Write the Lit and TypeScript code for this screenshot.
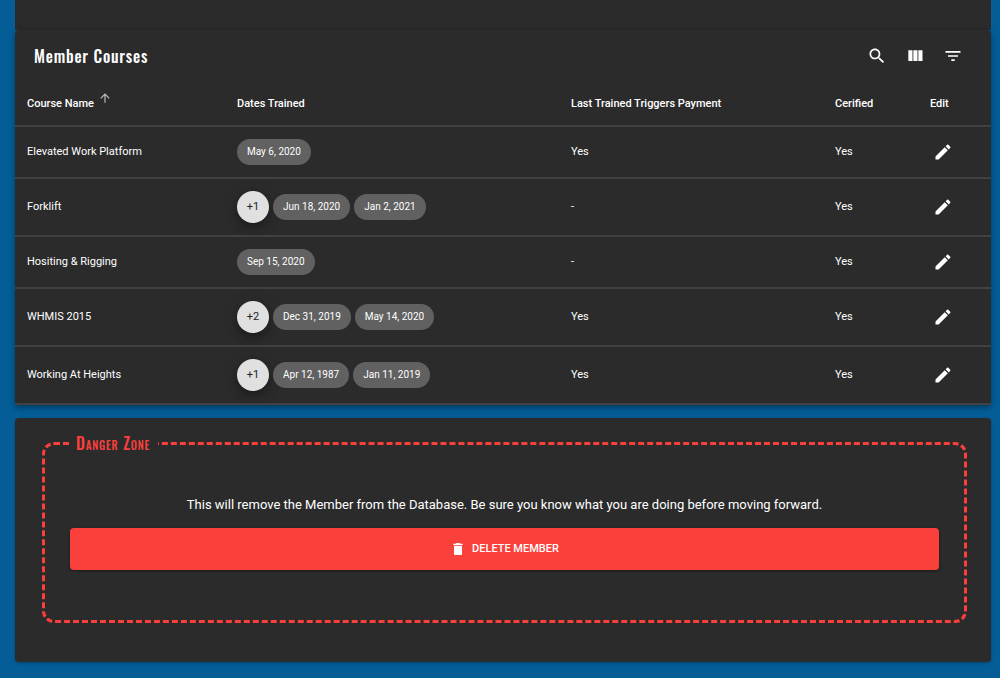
import { LitElement, html, css, svg } from "lit";
import { customElement } from "lit/decorators.js";

interface Course {
  name: string;
  more: number;
  dates: string[];
  payment: string;
  certified: string;
}

const courses: Course[] = [
  { name: "Elevated Work Platform", more: 0, dates: ["May 6, 2020"], payment: "Yes", certified: "Yes" },
  { name: "Forklift", more: 1, dates: ["Jun 18, 2020", "Jan 2, 2021"], payment: "-", certified: "Yes" },
  { name: "Hositing & Rigging", more: 0, dates: ["Sep 15, 2020"], payment: "-", certified: "Yes" },
  { name: "WHMIS 2015", more: 2, dates: ["Dec 31, 2019", "May 14, 2020"], payment: "Yes", certified: "Yes" },
  { name: "Working At Heights", more: 1, dates: ["Apr 12, 1987", "Jan 11, 2019"], payment: "Yes", certified: "Yes" },
];

const paths = {
  search:
    "M15.5 14h-.79l-.28-.27C15.41 12.59 16 11.11 16 9.5 16 5.91 13.09 3 9.5 3S3 5.91 3 9.5 5.91 16 9.5 16c1.61 0 3.09-.59 4.23-1.57l.27.28v.79l5 4.99L20.49 19l-4.99-5zm-6 0C7.01 14 5 11.99 5 9.5S7.01 5 9.5 5 14 7.01 14 9.5 11.99 14 9.5 14z",
  columns: "M10 18h5V5h-5v13zm-6 0h5V5H4v13zM16 5v13h5V5h-5z",
  filter: "M10 18h4v-2h-4v2zM3 6v2h18V6H3zm3 7h12v-2H6v2z",
  edit: "M3 17.25V21h3.75L17.81 9.94l-3.75-3.75L3 17.25zM20.71 7.04c.39-.39.39-1.02 0-1.41l-2.34-2.34c-.39-.39-1.02-.39-1.41 0l-1.83 1.83 3.75 3.75 1.83-1.83z",
  trash: "M6 19c0 1.1.9 2 2 2h8c1.1 0 2-.9 2-2V7H6v12zM19 4h-3.5l-1-1h-5l-1 1H5v2h14V4z",
  up: "M4 12l1.41 1.41L11 7.83V20h2V7.83l5.58 5.59L20 12l-8-8-8 8z",
};

const icon = (name: keyof typeof paths) => html`<svg viewBox="0 0 24 24" aria-hidden="true">
  ${svg`<path d=${paths[name]}></path>`}
</svg>`;

@customElement("app-root")
export class AppRoot extends LitElement {
  static styles = css`
    :host {
      display: block;
      min-height: 100vh;
      box-sizing: border-box;
      padding: 0 9px 16px 15px;
      background: #045d97;
      color: #fff;
      font: 11px/20px Roboto, sans-serif;
    }
    * {
      box-sizing: border-box;
    }
    svg {
      display: block;
      width: 20px;
      height: 20px;
      fill: currentColor;
    }
    button {
      border: 0;
      padding: 0;
      background: none;
      color: inherit;
      font: inherit;
      cursor: pointer;
    }
    .above {
      height: 30px;
      background: #2b2b2b;
    }
    .courses {
      background: #2b2b2b;
      border-radius: 4px;
      box-shadow: 0 2px 4px -1px rgba(0, 0, 0, 0.2), 0 4px 5px rgba(0, 0, 0, 0.14),
        0 1px 10px rgba(0, 0, 0, 0.12);
    }
    .toolbar {
      display: flex;
      align-items: center;
      justify-content: space-between;
      height: 51px;
      padding: 0 28px 0 19px;
    }
    h2,
    legend {
      margin: 0;
      font: 500 16px/20px Oswald, "Liberation Sans Narrow", sans-serif;
      letter-spacing: 0.05em;
    }
    .tools {
      display: flex;
      gap: 18px;
    }
    table {
      width: 100%;
      table-layout: fixed;
      border-collapse: separate;
      border-spacing: 0;
    }
    th,
    td {
      padding: 0 0 0 12px;
      height: 52px;
      text-align: left;
      border-bottom: 2px solid #414141;
    }
    th {
      height: 46px;
      padding-top: 2px;
      font-weight: 500;
    }
    .name {
      width: 210px;
    }
    .payment {
      width: 264px;
    }
    .certified {
      width: 95px;
    }
    .edit {
      width: 73px;
    }
    .sort {
      display: flex;
      align-items: center;
      gap: 4px;
      font-weight: 500;
    }
    .sort svg {
      width: 14px;
      height: 14px;
      margin-bottom: 12px;
      color: #bdbdbd;
    }
    .sort,
    .sort span {
      height: 20px;
    }
    .tall td {
      height: 58px;
    }
    .dates {
      display: flex;
      align-items: center;
      gap: 4px;
    }
    .chip {
      padding: 3px 10px;
      border-radius: 13px;
      background: #616161;
      font-size: 10px;
    }
    .more {
      width: 32px;
      height: 32px;
      border-radius: 50%;
      background: #e0e0e0;
      color: #222;
      box-shadow: 0 3px 5px -1px rgba(0, 0, 0, 0.2), 0 6px 10px rgba(0, 0, 0, 0.14),
        0 1px 18px rgba(0, 0, 0, 0.12);
    }
    .pencil {
      display: block;
      margin-left: 3px;
    }
    .danger {
      margin-top: 13px;
      padding: 15px 24px 39px 27px;
      background: #2b2b2b;
      border-radius: 4px;
      box-shadow: 0 1px 3px rgba(0, 0, 0, 0.3);
    }
    fieldset {
      min-width: 0;
      margin: 0;
      padding: 42px 25px 50px;
      border: 3px dashed #fa403b;
      border-radius: 12px;
    }
    legend {
      padding: 0 8px 0 6px;
      color: #fa403b;
      font-variant: small-caps;
    }
    p {
      margin: 0 0 13px;
      font-size: 13px;
      text-align: center;
    }
    .delete {
      display: flex;
      align-items: center;
      justify-content: center;
      gap: 6px;
      width: 100%;
      height: 42px;
      border-radius: 4px;
      background: #fa403b;
      font-weight: 500;
      text-transform: uppercase;
      box-shadow: 0 1px 3px rgba(0, 0, 0, 0.4);
    }
    .delete svg {
      width: 16px;
      height: 16px;
    }
  `;

  private row(c: Course) {
    return html`<tr class=${c.more ? "tall" : ""}>
      <td>${c.name}</td>
      <td>
        <div class="dates">
          ${c.more ? html`<button class="more">+${c.more}</button>` : ""}
          ${c.dates.map((d) => html`<span class="chip">${d}</span>`)}
        </div>
      </td>
      <td>${c.payment}</td>
      <td>${c.certified}</td>
      <td><button class="pencil" aria-label="Edit ${c.name}">${icon("edit")}</button></td>
    </tr>`;
  }

  render() {
    return html`
      <div class="above"></div>
      <section class="courses">
        <div class="toolbar">
          <h2>Member Courses</h2>
          <div class="tools">
            <button aria-label="Search">${icon("search")}</button>
            <button aria-label="View columns">${icon("columns")}</button>
            <button aria-label="Filter">${icon("filter")}</button>
          </div>
        </div>
        <table>
          <thead>
            <tr>
              <th class="name" aria-sort="ascending"><button class="sort"><span>Course Name</span>${icon("up")}</button></th>
              <th>Dates Trained</th>
              <th class="payment">Last Trained Triggers Payment</th>
              <th class="certified">Cerified</th>
              <th class="edit">Edit</th>
            </tr>
          </thead>
          <tbody>
            ${courses.map((c) => this.row(c))}
          </tbody>
        </table>
      </section>
      <section class="danger">
        <fieldset>
          <legend>Danger Zone</legend>
          <p>This will remove the Member from the Database. Be sure you know what you are doing before moving forward.</p>
          <button class="delete">${icon("trash")} Delete Member</button>
        </fieldset>
      </section>
    `;
  }
}
